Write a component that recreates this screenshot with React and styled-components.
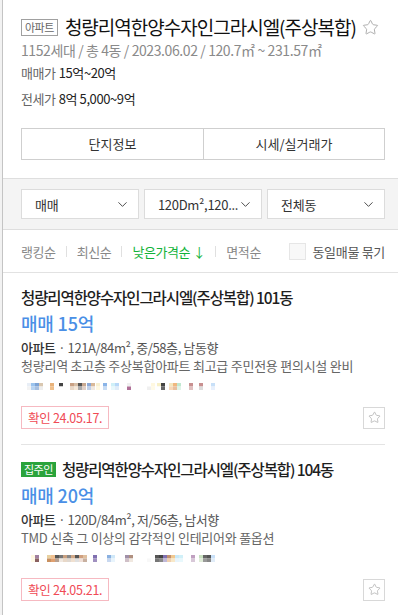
import React from 'react'
import styled, { createGlobalStyle } from 'styled-components'
import { ChevronDown, Star } from 'lucide-react'

const GlobalStyle = createGlobalStyle`
  html, body {
    margin: 0;
    padding: 0;
    background: #fff;
  }
  body {
    font-family: "Noto Sans CJK KR", "Noto Sans", sans-serif;
    color: #222;
  }
`

const Page = styled.div`
  display: flex;
  width: 398px;
  height: 615px;
  overflow: hidden;
`

const Gutter = styled.div`
  width: 2px;
  flex: none;
  background: #f2f2f2;
`

const Panel = styled.div`
  flex: 1;
  border-left: 1px solid #c4c4c4;
  min-width: 0;
`

const Section = styled.div`
  padding: 0 13px 0 18px;
`

const Header = styled(Section)`
  padding-top: 14px;
`

const TitleRow = styled.div`
  display: flex;
  align-items: center;
  height: 26px;
  gap: 7px;
`

const TypeBadge = styled.span`
  display: inline-flex;
  align-items: center;
  flex: none;
  height: 15px;
  padding: 0 3px;
  border: 1px solid #a0a0a0;
  color: #666;
  font-size: 11px;
  letter-spacing: -0.5px;
`

const ComplexName = styled.h1`
  margin: 0;
  font-size: 19px;
  font-weight: 400;
  letter-spacing: -1px;
  color: #111;
  line-height: 26px;
  white-space: nowrap;
`

const StarMark = styled(Star)`
  flex: none;
  color: #a8a8a8;
  margin-left: -1px;
`

const SubInfo = styled.div`
  height: 20px;
  line-height: 20px;
  font-size: 14px;
  color: #8a8a8a;
  letter-spacing: -0.4px;
`

const PriceLine = styled.div`
  height: 20px;
  line-height: 20px;
  margin-top: ${p => p.$gap}px;
  font-size: 13px;
  letter-spacing: -0.4px;
  color: #222;

  span {
    color: #666;
    margin-right: 3px;
  }
`

const Tabs = styled.div`
  display: grid;
  grid-template-columns: 1fr 1fr;
  margin-top: 19px;
  margin-bottom: 18px;
  border: 1px solid #cfcfcf;
`

const Tab = styled.div`
  height: 30px;
  line-height: 30px;
  text-align: center;
  font-size: 13px;
  color: #333;
  & + & {
    border-left: 1px solid #cfcfcf;
  }
`

const FilterBand = styled.div`
  display: grid;
  grid-template-columns: 1fr 1fr 1fr;
  gap: 5px;
  padding: 10px 13px 10px 18px;
  background: #f4f4f4;
  border-top: 1px solid #dedede;
  border-bottom: 1px solid #dedede;
`

const Select = styled.div`
  display: flex;
  align-items: center;
  justify-content: space-between;
  height: 28px;
  padding: 0 8px 0 13px;
  background: #fff;
  border: 1px solid #dcdcdc;
  font-size: 13px;
  color: #333;
  letter-spacing: -0.3px;
  white-space: nowrap;
`

const SortRow = styled.div`
  display: flex;
  align-items: center;
  height: 42px;
  padding: 0 13px 0 18px;
  border-bottom: 1px solid #e2e2e2;
`

const SortItem = styled.span`
  font-size: 13px;
  letter-spacing: -0.4px;
  color: ${p => (p.$active ? '#12b33a' : '#888')};
`

const Sep = styled.span`
  width: 1px;
  height: 11px;
  margin: 0 10px;
  background: #e0e0e0;
`

const Bundle = styled.label`
  display: flex;
  align-items: center;
  gap: 6px;
  margin-left: auto;
  font-size: 13px;
  color: #555;
  letter-spacing: -0.3px;
`

const Check = styled.span`
  width: 15px;
  height: 15px;
  border: 1px solid #e6e6e6;
  background: #f8f8f8;
`

const Item = styled.div`
  margin: 0 13px 0 18px;
  padding: 12px 0 15px;
  border-bottom: 1px solid #e4e4e4;
`

const ItemTitle = styled.div`
  display: flex;
  align-items: center;
  gap: 6px;
  height: 24px;
  font-size: 15.5px;
  font-weight: 500;
  letter-spacing: -1.1px;
  color: #1e1e1e;
  white-space: nowrap;
`

const OwnerBadge = styled.span`
  display: inline-flex;
  align-items: center;
  height: 15px;
  padding: 0 3px;
  background: #2aa33b;
  color: #fff;
  font-size: 11px;
  font-weight: 400;
  letter-spacing: -0.5px;
`

const Price = styled.div`
  margin-top: 1px;
  height: 26px;
  line-height: 26px;
  font-size: 18px;
  font-weight: 500;
  color: #4a8fe6;
  letter-spacing: -0.2px;
`

const Spec = styled.div`
  margin-top: 3px;
  line-height: 18px;
  font-size: 13px;
  color: #555;
  letter-spacing: -0.4px;

  b {
    font-weight: 500;
    color: #333;
  }
`

const Desc = styled.div`
  line-height: 18px;
  font-size: 13px;
  color: #666;
  letter-spacing: -0.25px;
`

const Mosaic = styled.svg`
  display: block;
  margin-top: 8px;
`

const ItemFooter = styled.div`
  display: flex;
  align-items: center;
  justify-content: space-between;
  margin-top: 16px;
`

const Confirm = styled.span`
  display: inline-flex;
  align-items: center;
  height: 21px;
  padding: 0 6px;
  border: 1px solid #f6b9c1;
  color: #f04a55;
  font-size: 12.5px;
  letter-spacing: -0.3px;
`

const StarBox = styled.span`
  display: flex;
  align-items: center;
  justify-content: center;
  width: 20px;
  height: 20px;
  border: 1px solid #d8d8d8;
  color: #aaa;
`

const mosaics = [
  [
    [24, '#e8eef6', '#f3f3f3'], [28, '#9cc4ee', '#b8d4f2'], [32, '#7ea4d6', '#a8c0e0'],
    [36, '#d9c7b0', '#eee'], [47, '#e8b27a', '#f0c08c'], [56, '#444', '#fff'],
    [67, '#c9a184', '#e8d8c8'], [71, '#d8c0a8', '#f6e8d8'], [75, '#555', '#aaa'],
    [79, '#c8a890', '#e0d0c8'], [84, '#8aa8d8', '#c0d0e8'], [88, '#d8b898', '#f0e8e0'],
    [93, '#f8f0d0', '#fff8e0'], [100, '#8ab4e8', '#c8dcf4'], [108, '#d0f0f8', '#e8f8fc'],
    [112, '#b8d8f8', '#e0ecf8'], [124, '#f0f0f0', '#b07098'], [144, '#fff', '#f0f0f0'],
    [148, '#fff8e0', '#fffae8'], [154, '#f8f0c8', '#fff'], [158, '#444', '#666'],
    [166, '#f4e8c0', '#f8d8b8'], [170, '#f0b880', '#e8c0a0'], [174, '#c0e8d0', '#e0f4e8'],
    [186, '#c89090', '#e0c0c0'], [196, '#c89090', '#dcdcdc'], [208, '#c8e0f8', '#e8f0fc']
  ],
  [
    [28, '#fff8e0', '#fffae8'], [32, '#a080a0', '#8a6060'], [44, '#e8d0a0', '#c89060'],
    [48, '#f0c090', '#e0a070'], [52, '#555', '#b8a090'], [56, '#777', '#f0e8e0'],
    [60, '#c8a080', '#e8d8c8'], [64, '#888', '#e0d8d0'], [68, '#d0a888', '#f0e0d0'],
    [72, '#555', '#e0e0e0'], [76, '#d0a080', '#f0e0d8'], [80, '#e0c0a0', '#c8b0a0'],
    [90, '#8070b0', '#a090c0'], [104, '#8ab0e0', '#c8d8f0'], [108, '#d0e8f8', '#e8f4fc'],
    [122, '#a090a8', '#d0c0c8'], [126, '#b09080', '#f0e8e0'], [144, '#fff', '#f8f8f8'],
    [152, '#555', '#777'], [156, '#444', '#888'], [160, '#8070b0', '#c0b8d8'],
    [164, '#c09070', '#f0d0b0'], [168, '#f0c890', '#f8e8c8'], [172, '#c8e8f8', '#e8f4fc'],
    [176, '#d0f0f8', '#e8f8fc'], [188, '#c0a0c0', '#d8c8d8'], [196, '#c8e0c0', '#e0ecd8'],
    [200, '#666', '#999'], [204, '#555', '#888'], [208, '#c8e0f8', '#e0ecf8']
  ]
]

function Blur({ cells }) {
  return (
    <Mosaic width="220" height="7" viewBox="0 0 220 7">
      {cells.map(([x, top, bottom]) => (
        <g key={x}>
          <rect x={x - 18} y="0" width="4" height="3.5" fill={top} />
          <rect x={x - 18} y="3.5" width="4" height="3.5" fill={bottom} />
        </g>
      ))}
    </Mosaic>
  )
}

const listings = [
  {
    owner: false,
    title: '청량리역한양수자인그라시엘(주상복합) 101동',
    price: '매매 15억',
    spec: '121A/84m², 중/58층, 남동향',
    desc: '청량리역 초고층 주상복합아파트 최고급 주민전용 편의시설 완비',
    date: '24.05.17.',
    mosaic: mosaics[0]
  },
  {
    owner: true,
    title: '청량리역한양수자인그라시엘(주상복합) 104동',
    price: '매매 20억',
    spec: '120D/84m², 저/56층, 남서향',
    desc: 'TMD 신축 그 이상의 감각적인 인테리어와 풀옵션',
    date: '24.05.21.',
    mosaic: mosaics[1]
  }
]

export default function App() {
  return (
    <Page>
      <GlobalStyle />
      <Gutter />
      <Panel>
        <Header>
          <TitleRow>
            <TypeBadge>아파트</TypeBadge>
            <ComplexName>청량리역한양수자인그라시엘(주상복합)</ComplexName>
            <StarMark size={17} strokeWidth={1.3} />
          </TitleRow>
          <SubInfo>1152세대 / 총 4동 / 2023.06.02 / 120.7㎡ ~ 231.57㎡</SubInfo>
          <PriceLine $gap={3}>
            <span>매매가</span>15억~20억
          </PriceLine>
          <PriceLine $gap={6}>
            <span>전세가</span>8억 5,000~9억
          </PriceLine>
          <Tabs>
            <Tab>단지정보</Tab>
            <Tab>시세/실거래가</Tab>
          </Tabs>
        </Header>

        <FilterBand>
          <Select>
            매매 <ChevronDown size={15} strokeWidth={1.4} />
          </Select>
          <Select>
            120Dm²,120... <ChevronDown size={15} strokeWidth={1.4} />
          </Select>
          <Select>
            전체동 <ChevronDown size={15} strokeWidth={1.4} />
          </Select>
        </FilterBand>

        <SortRow>
          <SortItem>랭킹순</SortItem>
          <Sep />
          <SortItem>최신순</SortItem>
          <Sep />
          <SortItem $active>낮은가격순 ↓</SortItem>
          <Sep />
          <SortItem>면적순</SortItem>
          <Bundle>
            <Check />
            동일매물 묶기
          </Bundle>
        </SortRow>

        {listings.map(item => (
          <Item key={item.title}>
            <ItemTitle>
              {item.owner && <OwnerBadge>집주인</OwnerBadge>}
              {item.title}
            </ItemTitle>
            <Price>{item.price}</Price>
            <Spec>
              <b>아파트</b> · {item.spec}
            </Spec>
            <Desc>{item.desc}</Desc>
            <Blur cells={item.mosaic} />
            <ItemFooter>
              <Confirm>확인 {item.date}</Confirm>
              <StarBox>
                <Star size={13} strokeWidth={1.3} />
              </StarBox>
            </ItemFooter>
          </Item>
        ))}
      </Panel>
    </Page>
  )
}
